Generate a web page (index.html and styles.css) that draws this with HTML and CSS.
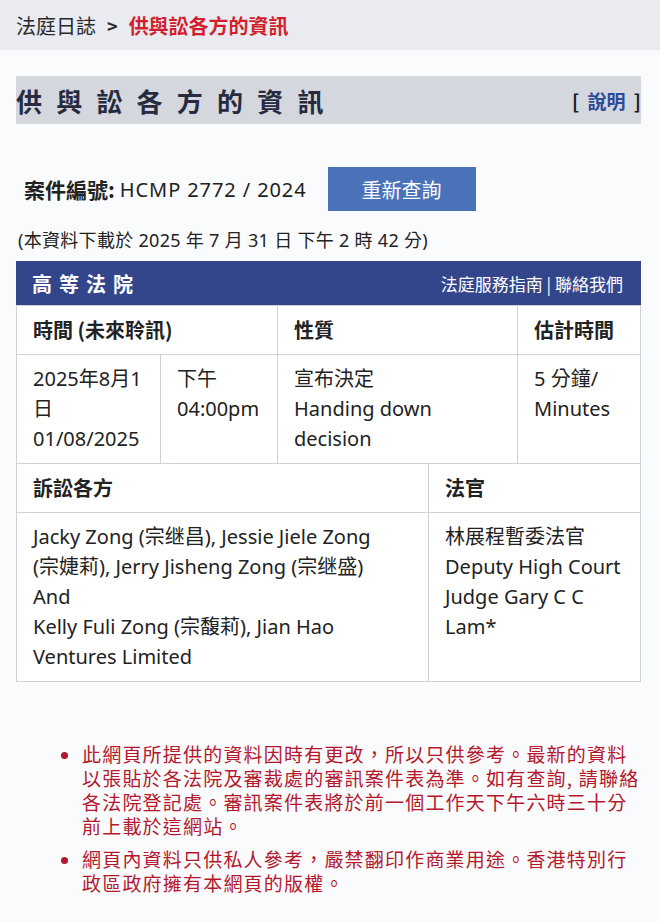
FILE: index.html
```html
<!DOCTYPE html>
<html lang="zh-Hant">
<head>
    <meta charset="UTF-8">
    <meta name="viewport" content="width=device-width, initial-scale=1.0">
    <title>供與訟各方的資訊</title>
    <link rel="stylesheet" href="styles.css">
</head>
<body>

<nav class="breadcrumb">
    <span>法庭日誌</span>
    <span class="sep">&gt;</span>
    <span class="current">供與訟各方的資訊</span>
</nav>

<main class="page">
    <div class="title-bar">
        <h1>供與訟各方的資訊</h1>
        <span class="help"><b>[</b> <a href="#">說明</a> <b>]</b></span>
    </div>

    <!-- 案件編號 -->
    <div class="case-row">
        <span class="case-label">案件編號:</span>
        <span class="case-no">HCMP 2772 / 2024</span>
        <button class="btn-search">重新查詢</button>
    </div>

    <p class="download-note">(本資料下載於 2025 年 7 月 31 日 下午 2 時 42 分)</p>

    <div class="court-bar">
        <h2>高等法院</h2>
        <div class="court-links"><a href="#">法庭服務指南</a> | <a href="#">聯絡我們</a></div>
    </div>

    <table class="hearing">
        <colgroup>
            <col style="width:144px">
            <col style="width:117px">
            <col style="width:240px">
            <col>
        </colgroup>
        <tr>
            <th colspan="2">時間 (未來聆訊)</th>
            <th>性質</th>
            <th>估計時間</th>
        </tr>
        <tr>
            <td>2025年8月1日<br>01/08/2025</td>
            <td>下午<br>04:00pm</td>
            <td>宣布決定<br>Handing down decision</td>
            <td>5 分鐘/<br>Minutes</td>
        </tr>
    </table>

    <table class="parties">
        <colgroup>
            <col style="width:412px">
            <col>
        </colgroup>
        <tr>
            <th>訴訟各方</th>
            <th>法官</th>
        </tr>
        <tr>
            <td>Jacky Zong (宗继昌), Jessie Jiele Zong (宗婕莉), Jerry Jisheng Zong (宗继盛)<br>And<br>Kelly Fuli Zong (宗馥莉), Jian Hao Ventures Limited</td>
            <td>林展程暫委法官<br>Deputy High Court Judge Gary C C Lam*</td>
        </tr>
    </table>

    <ul class="notes">
        <li>此網頁所提供的資料因時有更改，所以只供參考。最新的資料以張貼於各法院及審裁處的審訊案件表為準。如有查詢, 請聯絡各法院登記處。審訊案件表將於前一個工作天下午六時三十分前上載於這網站。</li>
        <li>網頁內資料只供私人參考，嚴禁翻印作商業用途。香港特別行政區政府擁有本網頁的版權。</li>
    </ul>
</main>

</body>
</html>
```

FILE: styles.css
```css
body {
    margin: 0;
    padding: 0;
    background-color: #fafbfc;
    color: #222;
    font-family: "Noto Sans", "Noto Sans CJK TC", sans-serif;
}

a {
    text-decoration: none;
    color: inherit;
}

/* 麵包屑 */
.breadcrumb {
    height: 50px;
    background-color: #e9ebf1;
    display: flex;
    align-items: center;
    gap: 11px;
    padding-left: 16px;
    font-family: "Noto Sans CJK TC", sans-serif;
    font-size: 20px;
    color: #2a2a2a;
}

.breadcrumb .sep {
    font-weight: bold;
    font-size: 18px;
}

.breadcrumb .current {
    color: #d21f2c;
    font-weight: bold;
}

.page {
    padding: 0 19px 0 16px;
}

/* 標題列 */
.title-bar {
    margin-top: 26px;
    height: 48px;
    background-color: #d4d7de;
    display: flex;
    align-items: center;
    justify-content: space-between;
}

.title-bar h1 {
    margin: 0;
    font-family: "Noto Sans CJK TC", sans-serif;
    font-size: 26px;
    font-weight: bold;
    letter-spacing: 14.2px;
    color: #262b40;
}

.help {
    font-family: "Noto Sans CJK TC", sans-serif;
    font-size: 19px;
    color: #1c1c1c;
    word-spacing: 4px;
}

.help a {
    color: #2b4a98;
    font-weight: bold;
}

/* 案件編號 */
.case-row {
    margin-top: 43px;
    padding-left: 8px;
    display: flex;
    align-items: center;
    font-size: 20px;
}

.case-label {
    font-family: "Noto Sans CJK TC", sans-serif;
    font-size: 21px;
    font-weight: bold;
}

.case-no {
    margin-left: 5px;
    letter-spacing: 0.9px;
}

.btn-search {
    margin-left: 21px;
    width: 148px;
    height: 44px;
    background-color: #4a72b8;
    color: #fff;
    border: none;
    font-family: "Noto Sans CJK TC", sans-serif;
    font-size: 20px;
    cursor: pointer;
}

.download-note {
    margin: 18px 0 0 2px;
    font-size: 18px;
    line-height: 22px;
    letter-spacing: 0.3px;
}

/* 法院標題 */
.court-bar {
    margin-top: 10px;
    height: 44px;
    background-color: #34468b;
    color: #fff;
    display: flex;
    align-items: center;
    justify-content: space-between;
    padding: 0 18px 0 16px;
}

.court-bar h2 {
    margin: 0;
    font-family: "Noto Sans CJK TC", sans-serif;
    font-size: 20px;
    letter-spacing: 7px;
}

.court-links {
    font-family: "Noto Sans CJK TC", sans-serif;
    font-size: 17px;
}

/* 表格 */
table {
    width: 100%;
    border-collapse: collapse;
    background-color: #fff;
    table-layout: fixed;
    font-size: 20px;
    line-height: 30px;
}

th, td {
    border: 1.5px solid #cdd1d8;
    padding: 9px 16px 9px;
    text-align: left;
    vertical-align: top;
}

th {
    font-family: "Noto Sans CJK TC", sans-serif;
    font-weight: bold;
}

.parties tr:first-child th {
    border-top: none;
}

.parties td {
    word-break: keep-all;
}

/* 備註 */
.notes {
    margin: 60px 0 0;
    padding-left: 66px;
    padding-right: 0;
    color: #b5172c;
    font-family: "Noto Sans CJK TC", sans-serif;
    font-size: 19px;
    line-height: 24px;
    letter-spacing: 1.2px;
}

.notes li {
    margin-bottom: 9px;
}
```
